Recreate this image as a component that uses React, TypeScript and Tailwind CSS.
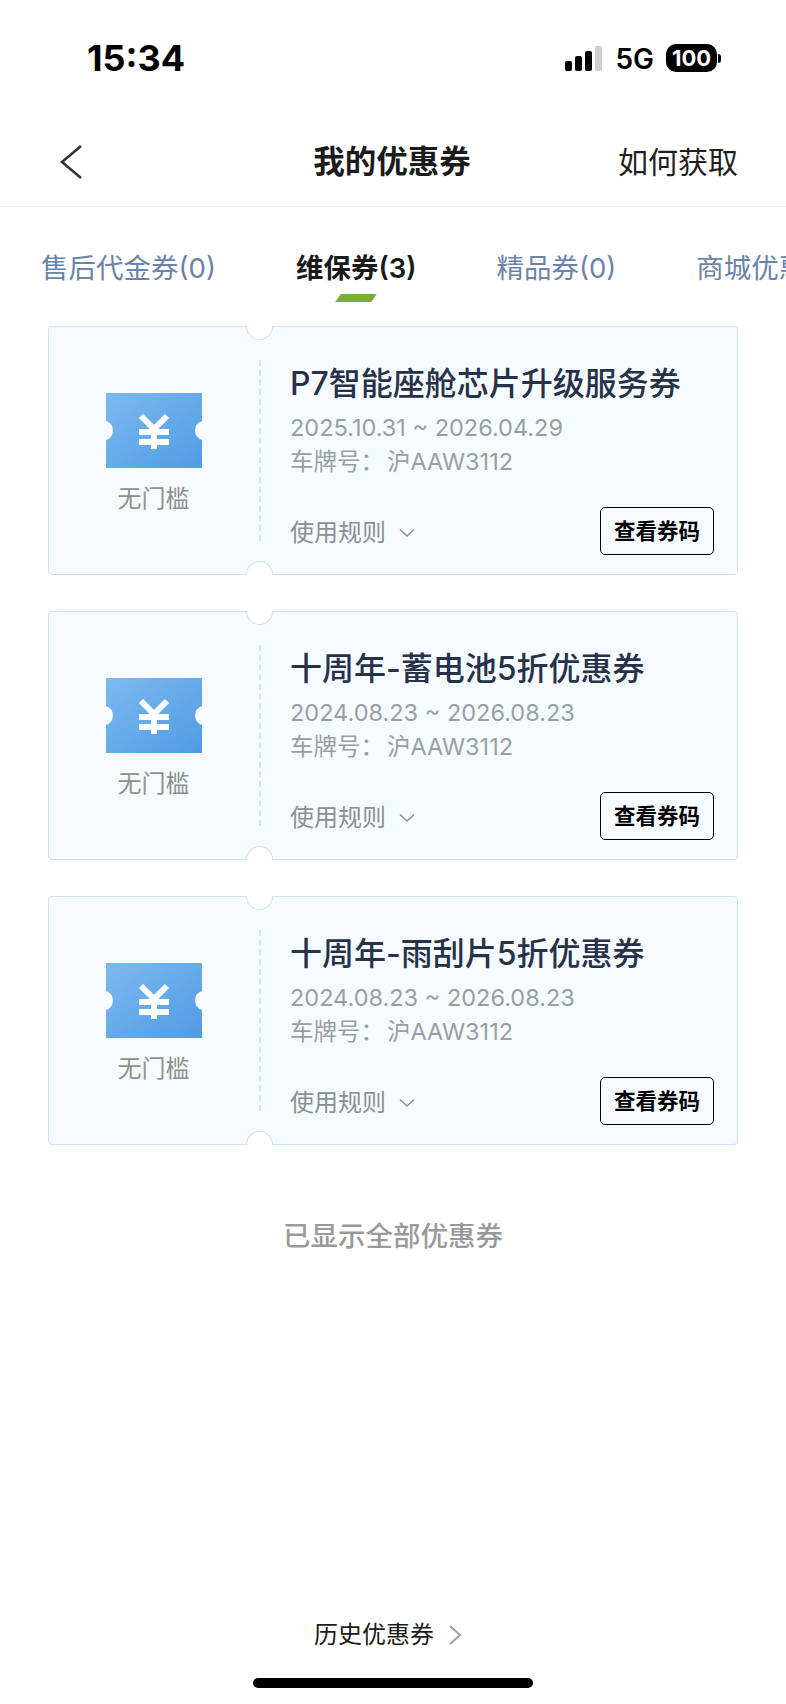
const FONT = "font-['Inter','Noto_Sans_CJK_SC',sans-serif]"

const TABS = [
  { label: '售后代金券(0)', active: false },
  { label: '维保券(3)', active: true },
  { label: '精品券(0)', active: false },
  { label: '商城优惠券(0)', active: false },
]

const COUPONS = [
  { title: 'P7智能座舱芯片升级服务券', dates: '2025.10.31 ~ 2026.04.29' },
  { title: '十周年-蓄电池5折优惠券', dates: '2024.08.23 ~ 2026.08.23' },
  { title: '十周年-雨刮片5折优惠券', dates: '2024.08.23 ~ 2026.08.23' },
]

function StatusBar() {
  return (
    <div className="h-[110px] flex justify-between pl-[87px] pr-[65px] pt-[38px] shrink-0">
      <div className="text-[36px] leading-[40px] font-bold text-black">15:34</div>
      <div className="flex items-start h-[40px] pt-[6px]">
        <div className="flex items-end gap-[3px] h-[25px] mt-[2px]">
          <div className="w-[7px] h-[10px] rounded-[2px] bg-black" />
          <div className="w-[7px] h-[15px] rounded-[2px] bg-black" />
          <div className="w-[7px] h-[20px] rounded-[2px] bg-black" />
          <div className="w-[7px] h-[25px] rounded-[2px] bg-[#cfcfcf]" />
        </div>
        <div className="ml-[13px] text-[28px] leading-[30px] font-semibold text-black">5G</div>
        <div className="ml-[12px] flex items-center">
          <div className="w-[51px] h-[28px] rounded-[10px] bg-black text-white text-[22px] leading-[28px] font-bold text-center">
            100
          </div>
          <div className="w-[3px] h-[9px] ml-[1px] rounded-r-[3px] bg-black" />
        </div>
      </div>
    </div>
  )
}

function NavBar() {
  return (
    <div className="h-[97px] shrink-0 border-b border-[#eeeeee] flex items-center justify-between pl-[59px] pr-[48px] pt-[8px] relative">
      <svg width="24" height="36" viewBox="0 0 24 36" fill="none">
        <path d="M22 2 L3 18 L22 34" stroke="#333" strokeWidth="2.6" />
      </svg>
      <div className="absolute left-0 right-[2px] text-center text-[31.5px] leading-[44px] font-bold text-[#1b1b1b] pointer-events-none">
        我的优惠券
      </div>
      <div className="text-[30px] leading-[44px] text-[#1f1f1f]">如何获取</div>
    </div>
  )
}

function Tabs() {
  return (
    <div className="h-[119px] shrink-0 overflow-hidden flex pl-[41px] pt-[38px] gap-[80px]">
      {TABS.map((t) => (
        <div key={t.label} className="relative shrink-0 w-fit">
          <div
            className={`text-[27.5px] leading-[46px] whitespace-nowrap ${
              t.active ? 'font-semibold text-[#1a1a1a]' : 'text-[#6b83a8]'
            }`}
          >
            {t.label}
          </div>
          {t.active && (
            <div className="absolute left-1/2 -translate-x-1/2 top-[49px] w-[36px] h-[8px] bg-[#7aad3f] -skew-x-[35deg]" />
          )}
        </div>
      ))}
    </div>
  )
}

function TicketIcon() {
  return (
    <svg width="96" height="75" viewBox="0 0 96 75">
      <defs>
        <linearGradient id="ticket" x1="0" y1="0" x2="1" y2="1">
          <stop offset="0" stopColor="#7db9f1" />
          <stop offset="1" stopColor="#4f9ce3" />
        </linearGradient>
      </defs>
      <path
        d="M0 0 H96 V28 A10 10 0 0 0 96 47 V75 H0 V47 A10 10 0 0 0 0 28 Z"
        fill="url(#ticket)"
      />
      <path
        d="M35 23 L48 36 L61 23 M33 39 H63 M33 49 H63 M48 36 V56"
        stroke="#fff"
        strokeWidth="6"
        fill="none"
      />
    </svg>
  )
}

function CouponCard({ title, dates }: { title: string; dates: string }) {
  return (
    <div className="relative h-[249px] rounded-[4px] border border-[#cde2f4] bg-[#f6fbff] flex">
      <div className="absolute left-[197px] -top-[1px] w-[27px] h-[14px] rounded-b-full bg-white border border-t-0 border-[#cde2f4]" />
      <div className="absolute left-[197px] -bottom-[1px] w-[27px] h-[14px] rounded-t-full bg-white border border-b-0 border-[#cde2f4]" />
      <div className="w-[210px] shrink-0 flex flex-col items-center pt-[66px] pr-[1px]">
        <TicketIcon />
        <div className="mt-[14px] text-[24px] leading-[34px] text-[#8f8f8f]">无门槛</div>
      </div>
      <div className="my-[33px] border-l-2 border-dashed border-[#d5e4f0]" />
      <div className="flex-1 min-w-0 pl-[29px] pr-[23px] pt-[37px]">
        <div className="text-[32px] leading-[40px] font-medium text-[#27324a] whitespace-nowrap">{title}</div>
        <div className="mt-[8px] text-[23.5px] leading-[32px] text-[#9a9ea3] whitespace-nowrap">{dates}</div>
        <div className="mt-[2px] text-[23.5px] leading-[32px] text-[#9a9ea3] whitespace-nowrap">
          车牌号：<span className="ml-[3px]">沪AAW3112</span>
        </div>
        <div className="mt-[29px] flex items-center justify-between">
          <div className="flex items-center text-[24px] leading-[34px] text-[#8b8f94] pt-[3px]">
            使用规则
            <svg className="ml-[13px]" width="16" height="10" viewBox="0 0 16 10" fill="none">
              <path d="M1 1.5 L8 8 L15 1.5" stroke="#8b8f94" strokeWidth="1.6" />
            </svg>
          </div>
          <div className="w-[114px] h-[48px] rounded-[5px] border-[1.5px] border-black flex items-center justify-center text-[21.5px] font-semibold text-black">
            查看券码
          </div>
        </div>
      </div>
    </div>
  )
}

export default function App() {
  return (
    <div className={`w-[786px] h-[1704px] bg-white flex flex-col overflow-hidden ${FONT}`}>
      <StatusBar />
      <NavBar />
      <Tabs />
      <div className="px-[48px] flex flex-col gap-[36px]">
        {COUPONS.map((c) => (
          <CouponCard key={c.title} title={c.title} dates={c.dates} />
        ))}
      </div>
      <div className="mt-[71px] text-center text-[27.5px] leading-[40px] font-medium text-[#999999]">已显示全部优惠券</div>
      <div className="mt-auto flex flex-col items-center">
        <div className="flex items-center h-[40px] pr-[10px]">
          <span className="text-[24px] leading-[40px] text-[#1a1a1a]">历史优惠券</span>
          <svg className="ml-[14px]" width="14" height="22" viewBox="0 0 14 22" fill="none">
            <path d="M2 2 L12 11 L2 20" stroke="#a3a3a3" strokeWidth="2.2" />
          </svg>
        </div>
        <div className="mt-[23px] mb-[16px] w-[280px] h-[10px] rounded-full bg-black" />
      </div>
    </div>
  )
}
